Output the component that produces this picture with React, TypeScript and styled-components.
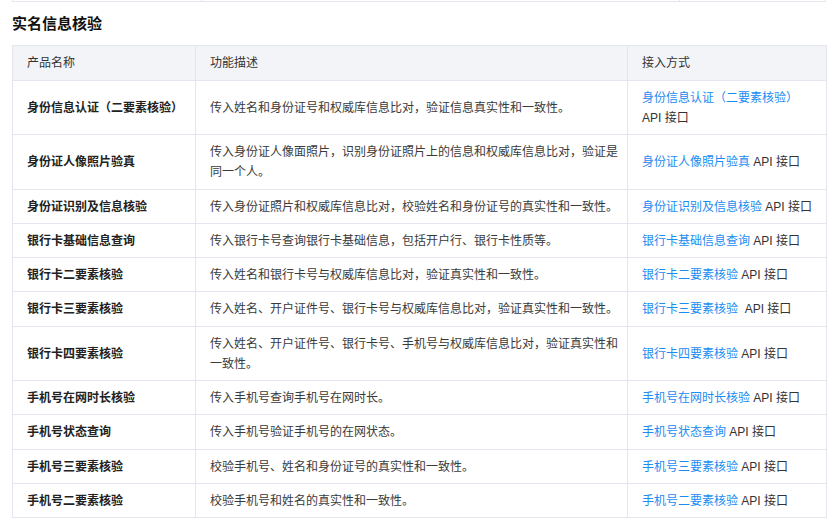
import React from "react";
import styled, { createGlobalStyle } from "styled-components";

const Global = createGlobalStyle`
  html, body { margin: 0; padding: 0; background: #ffffff; }
  body {
    font-family: "Liberation Sans", "Noto Sans CJK SC", sans-serif;
    color: #333333;
    font-size: 12px;
  }
`;

const Page = styled.div`
  width: 814px;
  padding: 0 8px 0 12px;
`;

const PrevStrip = styled.div`
  display: grid;
  grid-template-columns: 189px 478px 147px;
  height: 2px;
  border-left: 1px solid #e3e6ee;
  border-right: 1px solid #e3e6ee;
  border-bottom: 1px solid #e3e6ee;
  box-sizing: border-box;
`;

const PrevCell = styled.div`
  border-right: 1px solid #e3e6ee;
  &:last-child { border-right: none; }
`;

const Title = styled.h3`
  margin: 11px 0 10px;
  font-size: 15px;
  line-height: 22px;
  font-weight: 700;
  color: #111111;
`;

const Table = styled.table`
  width: 814px;
  border-collapse: collapse;
  table-layout: fixed;
`;

const HeadCell = styled.th`
  background: #f3f4f8;
  border: 1px solid #e3e6ee;
  padding: 7px 8px 7px 14px;
  line-height: 20px;
  font-size: 12px;
  font-weight: 400;
  text-align: left;
  color: #333333;
`;

const Cell = styled.td<{ $bold?: boolean }>`
  border: 1px solid #e3e6ee;
  padding: 7px 8px 6.3px 14px;
  line-height: 20px;
  font-size: 12px;
  vertical-align: middle;
  font-weight: ${(p) => (p.$bold ? 700 : 400)};
  color: ${(p) => (p.$bold ? "#222222" : "#3a3a3a")};
  word-break: break-all;
`;

const Link = styled.a`
  color: #1a8cf2;
  text-decoration: none;
`;

const Plain = styled.span`
  color: #333333;
  white-space: pre;
`;

type Row = { name: string; desc: string; link: string; sep?: string };

const rows: Row[] = [
  { name: "身份信息认证（二要素核验）", desc: "传入姓名和身份证号和权威库信息比对，验证信息真实性和一致性。", link: "身份信息认证（二要素核验）" },
  { name: "身份证人像照片验真", desc: "传入身份证人像面照片，识别身份证照片上的信息和权威库信息比对，验证是同一个人。", link: "身份证人像照片验真" },
  { name: "身份证识别及信息核验", desc: "传入身份证照片和权威库信息比对，校验姓名和身份证号的真实性和一致性。", link: "身份证识别及信息核验" },
  { name: "银行卡基础信息查询", desc: "传入银行卡号查询银行卡基础信息，包括开户行、银行卡性质等。", link: "银行卡基础信息查询" },
  { name: "银行卡二要素核验", desc: "传入姓名和银行卡号与权威库信息比对，验证真实性和一致性。", link: "银行卡二要素核验" },
  { name: "银行卡三要素核验", desc: "传入姓名、开户证件号、银行卡号与权威库信息比对，验证真实性和一致性。", link: "银行卡三要素核验", sep: "  " },
  { name: "银行卡四要素核验", desc: "传入姓名、开户证件号、银行卡号、手机号与权威库信息比对，验证真实性和一致性。", link: "银行卡四要素核验" },
  { name: "手机号在网时长核验", desc: "传入手机号查询手机号在网时长。", link: "手机号在网时长核验" },
  { name: "手机号状态查询", desc: "传入手机号验证手机号的在网状态。", link: "手机号状态查询" },
  { name: "手机号三要素核验", desc: "校验手机号、姓名和身份证号的真实性和一致性。", link: "手机号三要素核验" },
  { name: "手机号二要素核验", desc: "校验手机号和姓名的真实性和一致性。", link: "手机号二要素核验" },
];

export default function App() {
  return (
    <Page>
      <Global />
      <PrevStrip>
        <PrevCell />
        <PrevCell />
        <PrevCell />
      </PrevStrip>
      <Title>实名信息核验</Title>
      <Table>
        <colgroup>
          <col style={{ width: 183 }} />
          <col style={{ width: 432 }} />
          <col style={{ width: 199 }} />
        </colgroup>
        <thead>
          <tr>
            <HeadCell>产品名称</HeadCell>
            <HeadCell>功能描述</HeadCell>
            <HeadCell>接入方式</HeadCell>
          </tr>
        </thead>
        <tbody>
          {rows.map((r) => (
            <tr key={r.name}>
              <Cell $bold>{r.name}</Cell>
              <Cell>{r.desc}</Cell>
              <Cell>
                <Link href="#">{r.link}</Link>
                {r.sep ? <Plain>{r.sep}</Plain> : " "}
                <Plain>API 接口</Plain>
              </Cell>
            </tr>
          ))}
        </tbody>
      </Table>
    </Page>
  );
}
